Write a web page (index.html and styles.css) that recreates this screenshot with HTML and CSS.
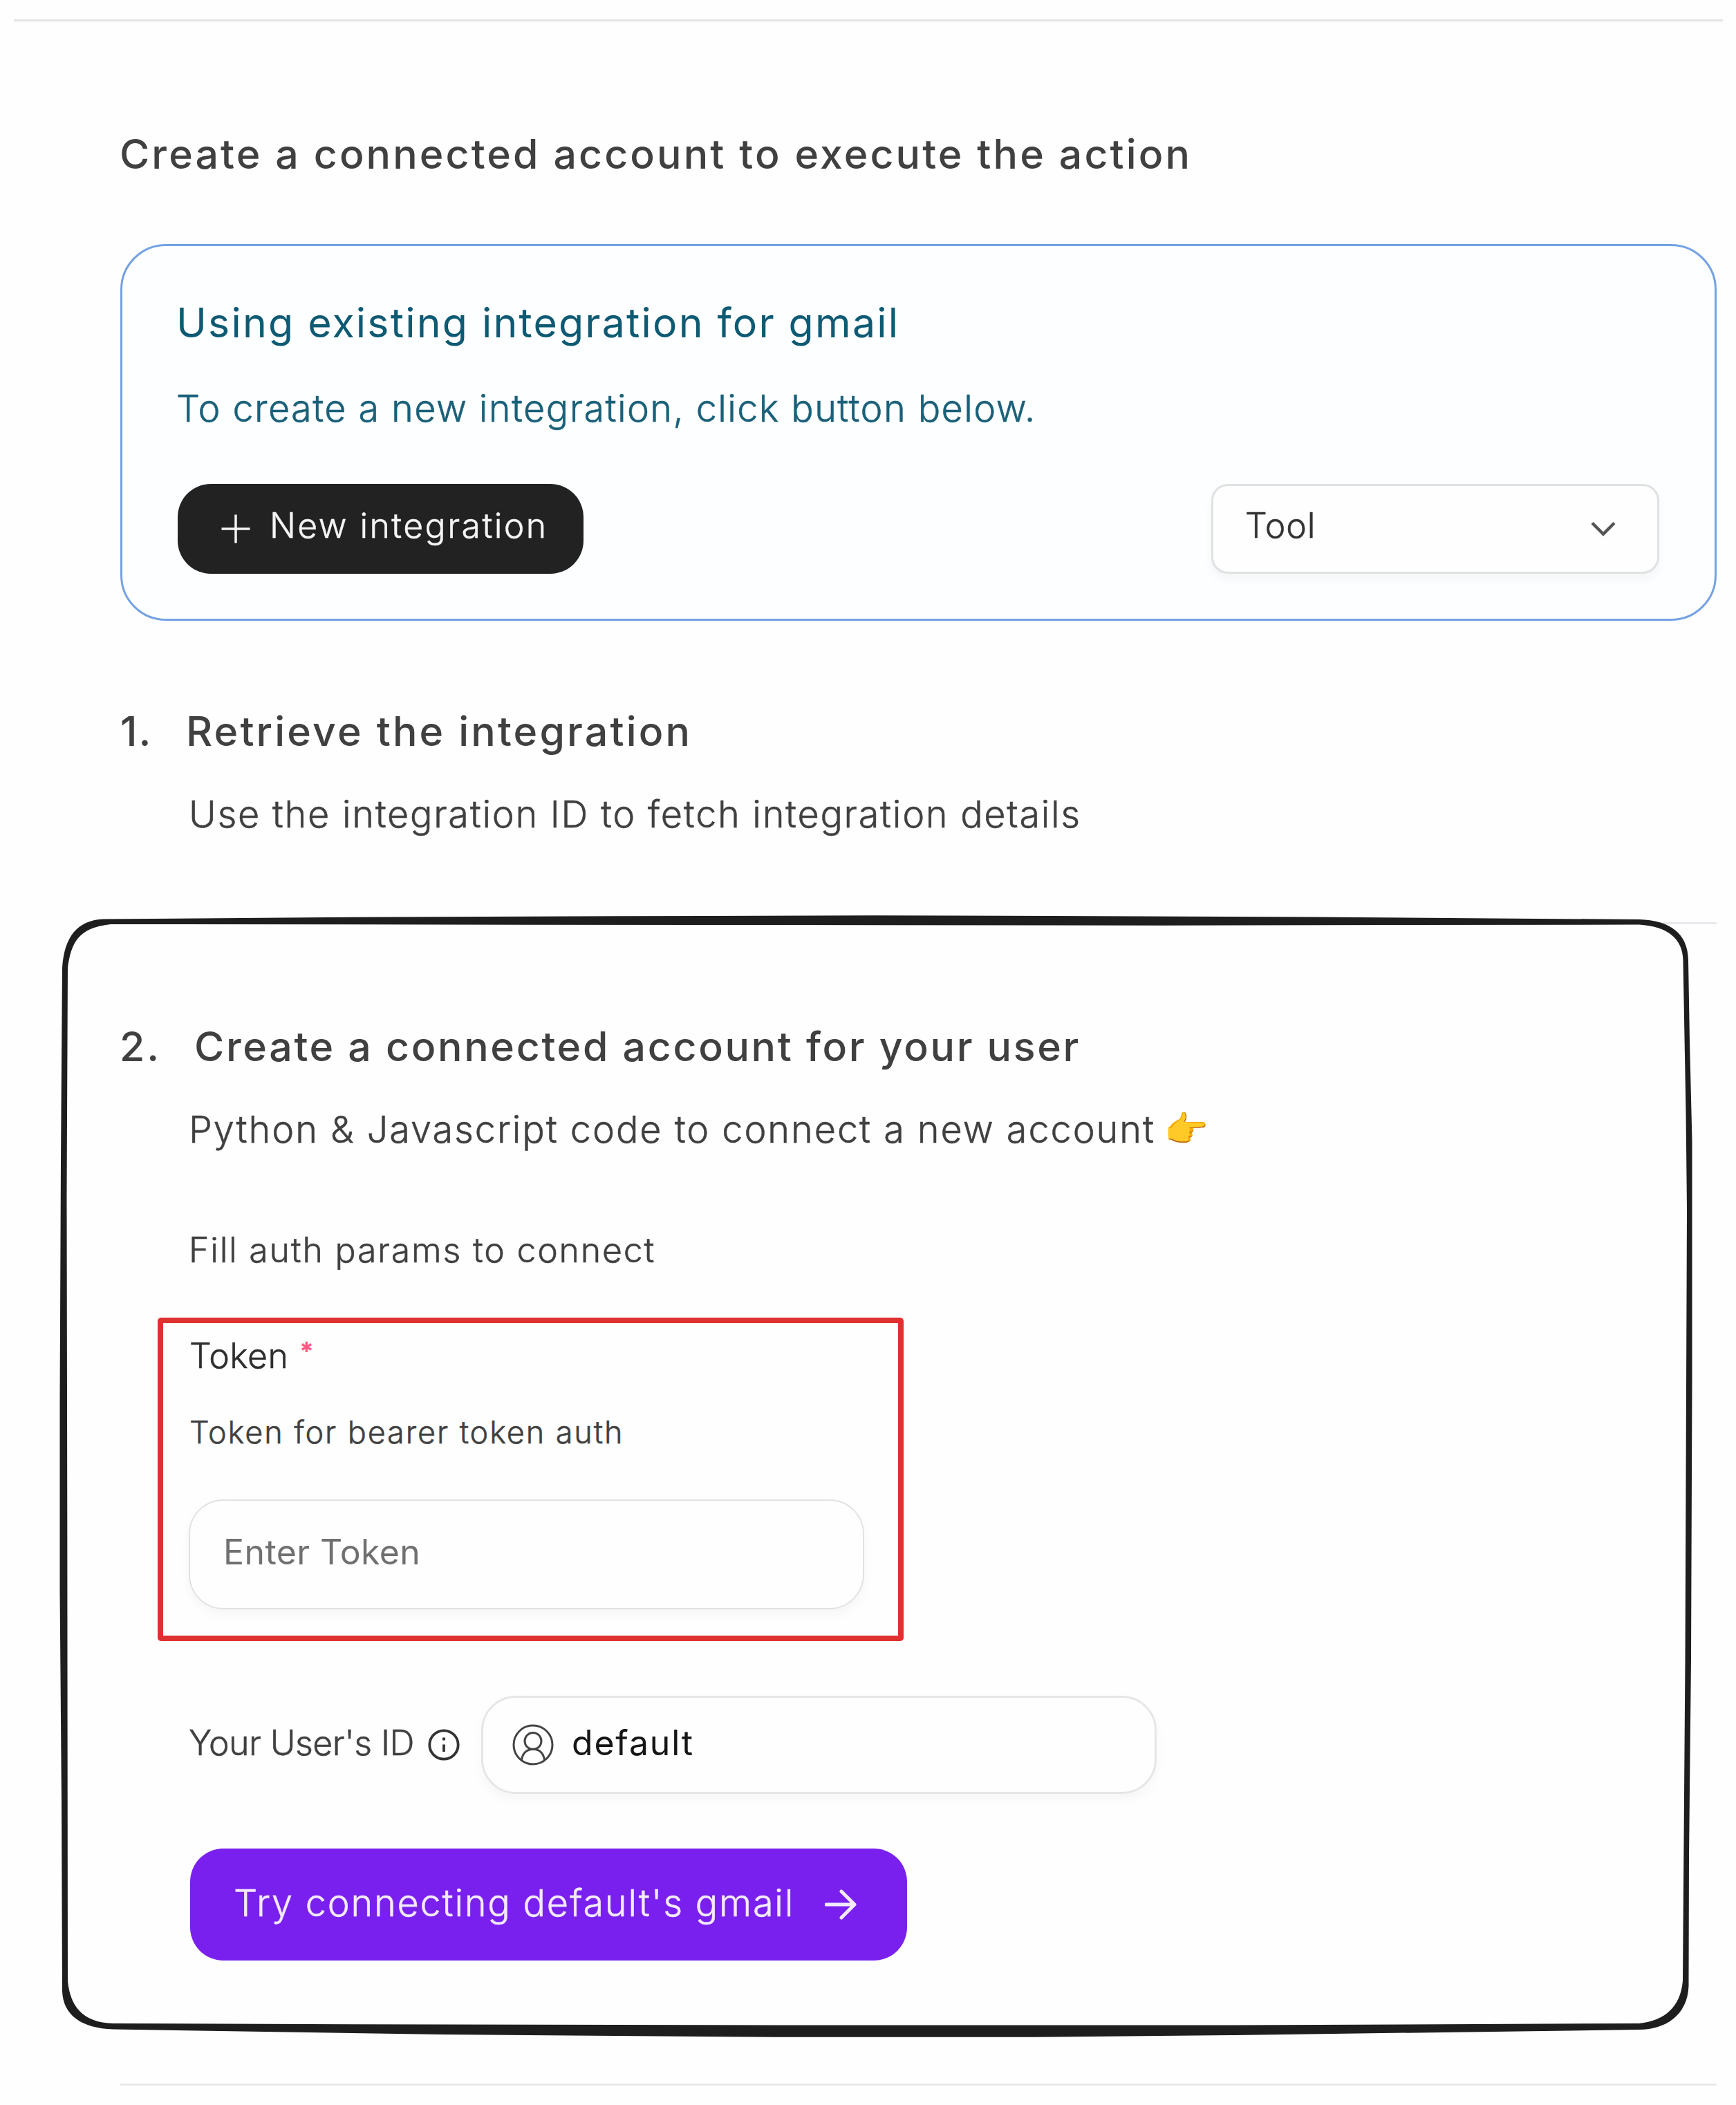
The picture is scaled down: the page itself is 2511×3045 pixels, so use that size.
FILE: index.html
```html
<!DOCTYPE html>
<html lang="en">
<head>
<meta charset="utf-8">
<title>Connected account</title>
<link rel="stylesheet" href="styles.css">
</head>
<body>
<div class="page">
  <hr class="rule rule-top">
  <main class="content">
    <h1 class="page-title">Create a connected account to execute the action</h1>

    <section class="card">
      <h2 class="card-title">Using existing integration for gmail</h2>
      <p class="card-text">To create a new integration, click button below.</p>
      <div class="card-actions">
        <button class="new-button" type="button">
          <svg class="plus-icon" viewBox="0 0 42 42"><path d="M21 0.5V41.5M0.5 21H41.5"/></svg>
          <span>New integration</span>
        </button>
        <div class="select">
          <span>Tool</span>
          <svg class="chevron-icon" viewBox="0 0 40 24"><path d="M4 3.5L20 19.5L36 3.5"/></svg>
        </div>
      </div>
    </section>

    <section class="step">
      <h2 class="step-title step-one"><span class="step-number">1.</span><span>Retrieve the integration</span></h2>
      <p class="step-text retrieve-text">Use the integration ID to fetch integration details</p>
    </section>

    <hr class="rule rule-step">

    <section class="step">
      <h2 class="step-title step-two"><span class="step-number">2.</span><span>Create a connected account for your user</span></h2>
      <p class="step-text connect-text">Python &amp; Javascript code to connect a new account <span class="emoji">👉</span></p>
      <div class="form">
        <p class="form-hint">Fill auth params to connect</p>
        <label class="field-label">Token <span class="required">*</span></label>
        <p class="field-help">Token for bearer token auth</p>
        <div class="token-input"><span>Enter Token</span></div>
        <div class="user-row">
          <span class="user-label">Your User's ID</span>
          <svg class="info-icon" viewBox="0 0 46 46"><circle cx="23" cy="23" r="20.7"/><path d="M23 22.5V33"/><circle class="dot" cx="23" cy="14.5" r="2.3"/></svg>
          <div class="user-input">
            <svg class="user-icon" viewBox="0 0 60 60"><circle cx="30" cy="30" r="28"/><circle cx="30" cy="24.5" r="12"/><path d="M13.5 52C14.5 42 21 36.2 30 36.2S45.500 42 46.500 52"/></svg>
            <span>default</span>
          </div>
        </div>
        <button class="connect-button" type="button">
          <span>Try connecting default's gmail</span>
          <svg class="arrow-icon" viewBox="0 0 46 44"><path d="M2 22H42M24 3L43 22L24 41"/></svg>
        </button>
      </div>
    </section>

    <hr class="rule rule-bottom">
  </main>

  <div class="token-highlight"></div>
  <svg class="sketch-frame" viewBox="0 0 2511 3045">
    <path fill-rule="evenodd" d="M150 1329.600L472 1327L890 1325.200L1256 1324.300L1375 1324.500L1901 1326.500L2371 1330C2415 1331 2442 1350 2442 1390L2444 1506L2447.500 1650V2000L2446 2400L2443 2688L2442.500 2873C2441 2915 2409 2936 2371 2936L1786 2944L1493 2946.700H1121L640 2943L164 2935.600C118 2934 91 2915 90 2880L89 2606L86.500 2300V2027L88 1680L90 1400C93 1355 112 1331 150 1329.600Z
    M160 1337L1121 1338L1680 1338.700L2371 1337.500C2412 1340 2434.500 1358 2434.500 1390L2438.500 1609L2440 1750L2437.500 2400L2434 2865C2431 2903 2408 2923 2371 2927L1786 2929.500H1121L640 2928.600L164 2927C118 2926 101 2900 98 2865L97.300 2200L96.500 1730L98 1400C103 1365 112 1342 160 1337Z"/>
  </svg>
</div>
</body>
</html>
```
FILE: styles.css
```css
* { box-sizing: border-box; }

body {
  margin: 0;
  background: #fefefe;
  color: #404040;
  font-family: Inter, "Liberation Sans", sans-serif;
}

h1, h2, p, hr { margin: 0; }

svg { display: block; flex: none; fill: none; }

button {
  border: 0;
  font: inherit;
}

.page {
  position: relative;
  width: 2511px;
  height: 3045px;
  overflow: hidden;
  display: flow-root;
}

.content { padding: 0 28px 0 174px; }

.rule {
  border: 0;
  height: 3px;
  background: #e9e9ed;
}

.rule-top { margin: 28px 19px 0 20px; background: #e4e4e4; }
.rule-step { margin-top: 120px; }
.rule-bottom { margin-top: 178px; }

.page-title {
  margin: 152px 0 0 -1px;
  font-size: 59px;
  font-weight: 500;
  line-height: 80px;
  letter-spacing: 3.1px;
  white-space: nowrap;
}

.card {
  height: 545px;
  margin-top: 90px;
  padding: 71px 80px 0;
  border: 3px solid #74a2e2;
  border-radius: 66px;
  background: #fcfeff;
  color: #1a6079;
}

.card-title {
  margin-left: -2px;
  color: #0f5a73;
  font-size: 59px;
  font-weight: 400;
  line-height: 80px;
  letter-spacing: 2.2px;
}

.card-text {
  margin: 48px 0 0 -2px;
  font-size: 54px;
  font-weight: 300;
  line-height: 72px;
  letter-spacing: 1.38px;
}

/* Slightly heavier than the light cut */
.card-text,
.new-button,
.select,
.step-text,
.form-hint,
.field-label,
.field-help,
.user-label,
.connect-button { -webkit-text-stroke: 0.5px currentColor; }

.card-actions {
  display: flex;
  justify-content: space-between;
  margin-top: 73px;
}

.new-button {
  display: flex;
  align-items: center;
  gap: 28px;
  width: 587px;
  height: 130px;
  padding: 0 0 0 63px;
  border-radius: 48px;
  background: #222;
  color: #f4f4f4;
  font-size: 50px;
  font-weight: 300;
  letter-spacing: 2.4px;
  white-space: nowrap;
}

.new-button span,
.select span { padding-bottom: 10px; }

.plus-icon {
  width: 42px;
  height: 42px;
  stroke: #f4f4f4;
  stroke-width: 3.5;
}

.select {
  display: flex;
  align-items: center;
  justify-content: space-between;
  width: 648px;
  height: 130px;
  padding: 0 58px 0 46px;
  border: 3px solid #e0e2e2;
  border-radius: 24px;
  background: #fefefe;
  box-shadow: 0 8px 14px rgba(0, 0, 0, 0.04);
  color: #333;
  font-size: 50px;
  font-weight: 300;
  letter-spacing: 0.9px;
}

.chevron-icon {
  width: 40px;
  height: 24px;
  stroke: #555;
  stroke-width: 4.5;
}

.step-title {
  display: flex;
  font-size: 59px;
  font-weight: 500;
  line-height: 80px;
}

.step-number { letter-spacing: 2px; }
.step-one { margin-top: 120px; letter-spacing: 3.15px; }
.step-one .step-number { width: 95px; }
.step-two { margin-top: 137px; letter-spacing: 2.68px; }
.step-two .step-number { width: 108px; margin-left: -1px; letter-spacing: 3px; }

.step-text {
  margin: 44px 0 0 99px;
  font-size: 54px;
  font-weight: 300;
  line-height: 72px;
  white-space: nowrap;
}

.retrieve-text { letter-spacing: 1.68px; }
.connect-text { letter-spacing: 1.92px; }

.emoji {
  margin-left: -4px;
  font-size: 51px;
  line-height: 1;
  vertical-align: 2px;
}

.form {
  padding-left: 99px;
  font-size: 50px;
  font-weight: 300;
}

.form-hint {
  margin-top: 103px;
  line-height: 70px;
  letter-spacing: 1.77px;
}

.field-label {
  display: block;
  margin: 83px 0 0 1px;
  color: #2e2e2e;
  line-height: 70px;
  letter-spacing: 0.4px;
}

.required {
  margin-left: 2px;
  color: #ff5c85;
  font-size: 36px;
  font-weight: 600;
  vertical-align: 12px;
  line-height: 1;
}

.field-help {
  margin: 46px 0 0 1px;
  font-size: 45px;
  line-height: 60px;
  letter-spacing: 1.9px;
}

.token-input {
  display: flex;
  align-items: center;
  width: 977px;
  height: 159px;
  margin-top: 67px;
  padding: 0 0 7px 48px;
  border: 2px solid #e2e2e2;
  border-radius: 50px;
  background: #fefefe;
  box-shadow: 0 8px 16px rgba(0, 0, 0, 0.035);
  color: #707070;
  font-weight: 400;
  letter-spacing: 0.4px;
}

.user-row {
  display: flex;
  align-items: center;
  height: 142px;
  margin-top: 125px;
}

.user-label {
  width: 346px;
  padding-bottom: 6px;
  letter-spacing: -0.55px;
  white-space: nowrap;
}

.info-icon {
  width: 46px;
  height: 46px;
  stroke: #333;
  stroke-width: 3.8;
}

.info-icon .dot { fill: #333; stroke: none; }

.user-input {
  display: flex;
  align-items: center;
  gap: 26px;
  width: 977px;
  height: 142px;
  margin-left: 31px;
  padding-left: 42px;
  border: 3px solid #e6e6e6;
  border-radius: 50px;
  background: #fefefe;
  box-shadow: 0 8px 16px rgba(0, 0, 0, 0.035);
  color: #151515;
  font-weight: 400;
  letter-spacing: 1.8px;
}

.user-input span { padding-bottom: 7px; }

.user-icon {
  width: 60px;
  height: 60px;
  stroke: #444;
  stroke-width: 3;
}

.connect-button {
  display: flex;
  align-items: center;
  width: 1037px;
  height: 162px;
  margin: 79px 0 0 2px;
  padding: 0 0 0 63px;
  border-radius: 48px;
  background: #7a20ee;
  color: #f3eaff;
  font-size: 54px;
  font-weight: 300;
  letter-spacing: 1.76px;
  white-space: nowrap;
}

.connect-button span { width: 855px; padding-bottom: 6px; text-align: left; }

.arrow-icon {
  width: 46px;
  height: 44px;
  stroke: #f3eaff;
  stroke-width: 5;
  stroke-linecap: round;
  stroke-linejoin: round;
}

/* Hand-drawn annotations over the page */
.token-highlight {
  position: absolute;
  left: 228px;
  top: 1906px;
  width: 1079px;
  height: 468px;
  border: 8px solid #e03131;
  border-radius: 5px;
}

.sketch-frame {
  position: absolute;
  left: 0;
  top: 0;
  width: 2511px;
  height: 3045px;
  fill: #1e1e1e;
}
```
